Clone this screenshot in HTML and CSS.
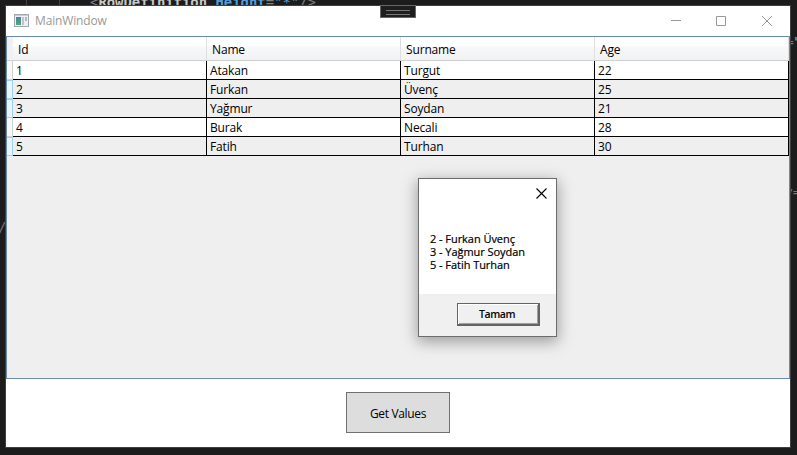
FILE: index.html
```
<!DOCTYPE html>
<html lang="tr">
<head>
<meta charset="utf-8">
<title>MainWindow</title>
<link rel="stylesheet" href="styles.css">
</head>
<body>
<div class="code code-top"><i class="guide"></i><i class="guide"></i><span><s>&lt;</s><b>RowDefinition <em>Height</em></b><s>=</s><em>"*"</em><s>/&gt;</s></span></div>
<div class="code code-slash">/</div>
<div class="code code-eq"><s>=</s><em>"</em></div>
<div class="code code-y">y=</div>
<main class="window">
  <header class="titlebar">
    <svg class="app-icon" width="15" height="13" viewBox="0 0 15 13">
      <defs><linearGradient id="g" x2="0" y2="1"><stop stop-color="#4384a8"/><stop offset="1" stop-color="#55a878"/></linearGradient></defs>
      <rect x=".5" y=".5" width="14" height="12" fill="#eef0f3" stroke="#a3a8b0"/>
      <rect x="1" y="1" width="13" height="1" fill="#c8ccd2"/>
      <rect x="2" y="3" width="5" height="8" fill="url(#g)"/>
      <rect x="8" y="3" width="2" height="8" fill="#b6c7cf"/>
      <rect x="11" y="3" width="2" height="4" fill="#a9bcc9"/>
    </svg>
    <h1>MainWindow</h1>
    <svg class="controls" width="101" height="12" viewBox="0 0 101 12" fill="none" stroke="#999">
      <path d="M0 5.5H10M45.500 1.5h9v9h-9zM91 1l10 10M101 1L91 11"/>
    </svg>
  </header>
  <section class="grid">
    <div class="row head"><i></i><div>Id</div><div>Name</div><div>Surname</div><div>Age</div></div>
    <div class="row"><i></i><div>1</div><div>Atakan</div><div>Turgut</div><div>22</div></div>
    <div class="row selected"><i></i><div>2</div><div>Furkan</div><div>Üvenç</div><div>25</div></div>
    <div class="row selected"><i></i><div>3</div><div>Yağmur</div><div>Soydan</div><div>21</div></div>
    <div class="row"><i></i><div>4</div><div>Burak</div><div>Necali</div><div>28</div></div>
    <div class="row selected"><i></i><div>5</div><div>Fatih</div><div>Turhan</div><div>30</div></div>
  </section>
  <footer class="actions"><button class="get">Get Values</button></footer>
</main>
<div class="debug-tab"></div>
<div class="dialog">
  <svg class="close" width="11" height="11" viewBox="0 0 11 11" stroke="#000" stroke-width="1.1"><path d="M.5.5l10 10M10.5.5l-10 10"/></svg>
  <p>2 - Furkan Üvenç<br>3 - Yağmur Soydan<br>5 - Fatih Turhan</p>
  <div class="dialog-foot"><button class="ok"><span>Tamam</span></button></div>
</div>
</body>
</html>
```
FILE: styles.css
```
* { box-sizing: border-box; }
body {
  margin: 0;
  width: 797px;
  height: 455px;
  padding: 5px;
  overflow: hidden;
  position: relative;
  background: #1c1c1c;
  font: 12px/16px "Open Sans", "Noto Sans", sans-serif;
  letter-spacing: -.15px;
  color: #000;
}
.code {
  position: absolute;
  overflow: hidden;
  font: 13px/15px "DejaVu Sans Mono", monospace;
  letter-spacing: 0;
  color: #777;
  white-space: pre;
}
.code b { color: #c8c8c8; }
.code em { color: #569cd6; font-style: normal; }
.code s { color: #808080; text-decoration: none; }
.code-top { left: 0; top: 0; width: 400px; height: 5px; }
.code-top span { position: absolute; left: 90px; top: -5px; font-size: 13.9px; }
.guide { position: absolute; left: 26px; top: 0; width: 1px; height: 5px; background: #444; }
.guide + .guide { left: 59px; }
.code-slash { left: -2px; top: 220px; font-size: 14px; }
.code-eq { left: 786px; top: 34px; width: 11px; }
.code-eq em { font-weight: 700; }
.code-y { left: 785px; top: 184px; }
.window {
  position: relative;
  width: 786px;
  height: 443px;
  background: #fff;
  border: 1px solid #404040;
}
.titlebar {
  height: 30px;
  display: flex;
  align-items: center;
  padding: 0 18px 0 8px;
}
.app-icon { margin-top: -1px; }
.titlebar h1 {
  margin: 0 auto 0 6px;
  font-size: 12px;
  font-weight: 400;
  color: #999;
}
.controls { margin-top: -1px; }
.grid {
  height: 343px;
  background: #efefef;
  border: 1px solid #688caf;
}
.row {
  display: grid;
  grid-template-columns: 6px repeat(4, 194px);
  grid-template-rows: 100%;
  height: 19px;
}
.row > div {
  padding-left: 3px;
  line-height: 19px;
  background: #fff;
  border-right: 1px solid #000;
  border-bottom: 1px solid #000;
}
.row > i {
  background: #f8f8f8;
  border-right: 1px solid #d0d0d0;
  border-bottom: 1px solid #d5d5d5;
}
.row.selected > div { background: #efefef; }
.row.selected > i { background: #eaf5fb; border: 1px solid #98d4f4; border-left: 0; }
.row.head { height: 24px; width: 782px; background: linear-gradient(#fff 40%, #f7f8f9 42%, #f1f2f4); border-bottom: 1px solid #d0d0d0; }
.row.head > div {
  background: none;
  padding-left: 5px;
  line-height: 25px;
  border-bottom: 0;
  border-right: 1px solid #dedfe1;
}
.row.head > i { background: #f1f1f1; border-bottom: 0; border-color: #f1f1f1; }
.actions { display: flex; justify-content: center; padding: 13px 0 0; }
.get {
  width: 104px;
  height: 41px;
  padding: 2px 0 0;
  border: 1px solid #707070;
  background: #ddd;
  font: inherit;
  letter-spacing: -.35px;
}
.debug-tab {
  position: absolute;
  left: 380px;
  top: 5px;
  width: 36px;
  height: 13px;
  padding: 4px 5px;
  background: #1e1e1e;
  border: 1px solid #666;
}
.debug-tab::before {
  content: "";
  display: block;
  height: 3px;
  border: solid #777;
  border-width: 1px 0;
}
.dialog {
  position: absolute;
  left: 418px;
  top: 178px;
  width: 139px;
  height: 159px;
  display: flex;
  flex-direction: column;
  background: #fff;
  border: 1px solid #6c6c6c;
  box-shadow: 0 4px 14px 1px rgba(0, 0, 0, .34);
}
.close { align-self: flex-end; margin: 9px 9px 0 0; }
.dialog p {
  margin: 33px 0 0 11px;
  font-size: 11px;
  line-height: 13px;
  letter-spacing: -.05px;
  -webkit-text-stroke: .2px #000;
  white-space: nowrap;
}
.dialog-foot {
  margin-top: auto;
  height: 42px;
  padding: 9px 0 0 38px;
  background: #f0f0f0;
}
.ok {
  display: block;
  width: 83px;
  height: 23px;
  padding: 0 2px 0 0;
  background: #f0f0f0;
  border: 1px solid #646464;
  border-right-width: 2px;
  border-bottom-width: 2px;
  box-shadow: inset 1px 1px #fff, inset -1px -1px #a0a0a0;
  font: 600 10.5px/20px "Open Sans", sans-serif;
  letter-spacing: -.4px;
}
```
